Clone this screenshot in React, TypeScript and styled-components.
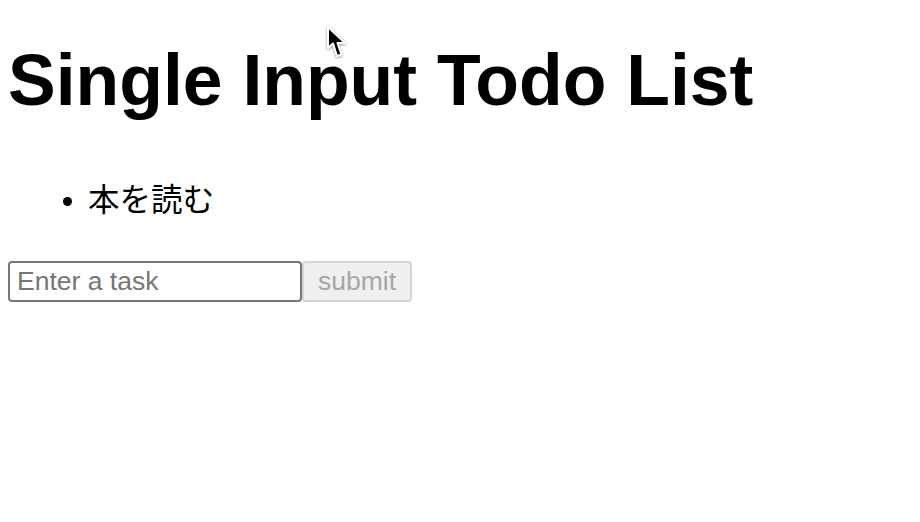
import React, { useState } from 'react';
import styled, { createGlobalStyle } from 'styled-components';

const GlobalStyle = createGlobalStyle`
  body {
    margin: 8px;
    background: #ffffff;
    color: #000000;
    font-family: "Liberation Sans", Arial, "Noto Sans CJK JP", sans-serif;
  }
`;

export default function App() {
  const [todos, setTodos] = useState<string[]>(['本を読む']);
  const [task, setTask] = useState('');

  const onSubmit = (e: React.FormEvent) => {
    e.preventDefault();
    if (!task) return;
    setTodos([...todos, task]);
    setTask('');
  };

  return (
    <>
      <GlobalStyle />
      <Page>
        <Title>Single Input Todo List</Title>
        <TodoList>
          {todos.map((todo, idx) => (
            <TodoItem key={idx}>{todo}</TodoItem>
          ))}
        </TodoList>
        <Form onSubmit={onSubmit}>
          <TaskInput
            value={task}
            placeholder="Enter a task"
            onChange={(e) => setTask(e.target.value)}
          />
          <SubmitButton type="submit" disabled={!task}>
            submit
          </SubmitButton>
        </Form>
      </Page>
      {/* mouse pointer captured in the screenshot */}
      <Pointer width="24" height="36" viewBox="0 0 24 36">
        <path
          d="M2 2 L2 23 L7 18.5 L11 31 L15.5 29.5 L11.5 18 L19 18 Z"
          fill="#000"
          stroke="#fff"
          strokeWidth="2"
          strokeLinejoin="round"
        />
      </Pointer>
    </>
  );
}

const Page = styled.div``;

const Title = styled.h1`
  margin: 32px 0 57px;
  font-size: 71.5px;
  font-weight: 700;
  line-height: 80px;
`;

const TodoList = styled.ul`
  margin: 0 0 44px;
  padding-left: 80px;
`;

const TodoItem = styled.li`
  font-family: "Noto Sans CJK JP", sans-serif;
  font-size: 31.5px;
  line-height: 40px;

  &::marker {
    font-family: "Liberation Sans", Arial, sans-serif;
    font-size: 30px;
  }
`;

const Form = styled.form`
  display: flex;
  align-items: stretch;
`;

const TaskInput = styled.input`
  box-sizing: border-box;
  width: 294px;
  height: 41px;
  margin: 0;
  padding: 0 7px;
  border: 2px solid #767676;
  border-radius: 4px;
  font-family: "Liberation Sans", Arial, sans-serif;
  font-size: 26.5px;
  color: #000;
  outline: none;

  &::placeholder {
    color: #757575;
  }
`;

const SubmitButton = styled.button`
  box-sizing: border-box;
  width: 110px;
  height: 41px;
  margin: 0;
  padding: 0;
  border: 2px solid #d4d4d4;
  border-radius: 4px;
  background: #efefef;
  font-family: "Liberation Sans", Arial, sans-serif;
  font-size: 26.5px;
  color: #a6a6a6;

  &:enabled {
    color: #000;
    border-color: #767676;
  }
`;

const Pointer = styled.svg`
  position: absolute;
  left: 326px;
  top: 25px;
  filter: drop-shadow(0 1px 1.5px rgba(0, 0, 0, 0.4));
`;
